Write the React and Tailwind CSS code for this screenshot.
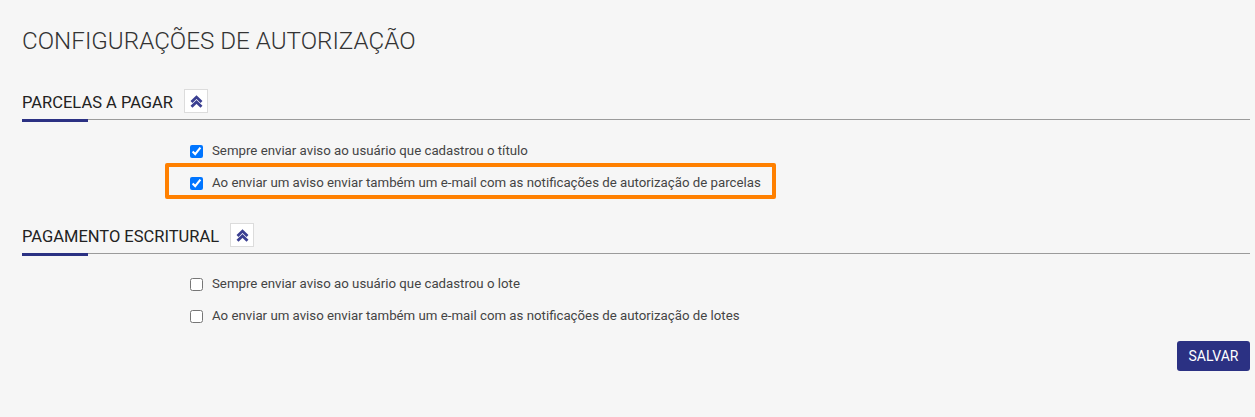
import React from "react";

function Chevrons() {
  return (
    <span className="flex h-[24px] w-[24px] items-center justify-center border border-[#dcdcdc] bg-white">
      <svg width="13" height="13" viewBox="0 0 13 13" fill="none">
        <polyline points="1.5,6.9 6.5,2.1 11.5,6.9" stroke="#3a3f91" strokeWidth="2.8" strokeLinejoin="miter" />
        <polyline points="1.5,11.8 6.5,7 11.5,11.8" stroke="#3a3f91" strokeWidth="2.8" strokeLinejoin="miter" />
      </svg>
    </span>
  );
}

function SectionHeader({ title }) {
  return (
    <div>
      <div className="flex h-[24px] items-center gap-[11px]">
        <span className="pt-[3px] text-[16.5px] leading-[21px] text-[#222]">{title}</span>
        <Chevrons />
      </div>
      <div className="relative mt-[6px] h-[3px]">
        <div className="h-px bg-[#9b9b9b]" />
        <div className="absolute left-0 top-0 h-[3px] w-[66px] bg-[#2b3183]" />
      </div>
    </div>
  );
}

function Row({ label, checked }) {
  return (
    <label className="flex h-[32px] items-center pl-[168px]">
      <input type="checkbox" defaultChecked={checked} className="m-0 h-[13px] w-[13px]" />
      <span className="ml-[9px] text-[13.25px] leading-[16px] text-[#444]">{label}</span>
    </label>
  );
}

export default function App() {
  return (
    <div className="min-h-[417px] w-full bg-[#f6f6f6] pl-[22px] pr-[5px] pt-[27px]" style={{ fontFamily: "Roboto, 'Open Sans', sans-serif" }}>
      <h1 className="text-[24.2px] font-light leading-[28px] text-[#333]">CONFIGURAÇÕES DE AUTORIZAÇÃO</h1>

      <div className="mt-[34px]">
        <SectionHeader title="PARCELAS A PAGAR" />
        <div className="mt-[13px]">
          <Row label="Sempre enviar aviso ao usuário que cadastrou o título" checked />
          <div className="relative">
            <Row label="Ao enviar um aviso enviar também um e-mail com as notificações de autorização de parcelas" checked />
            <div className="pointer-events-none absolute left-[143px] top-[-4px] h-[36px] w-[611px] rounded-[2px] border-4 border-[#ff8000]" />
          </div>
        </div>
      </div>

      <div className="mt-[24px]">
        <SectionHeader title="PAGAMENTO ESCRITURAL" />
        <div className="mt-[12px]">
          <Row label="Sempre enviar aviso ao usuário que cadastrou o lote" />
          <Row label="Ao enviar um aviso enviar também um e-mail com as notificações de autorização de lotes" />
        </div>
      </div>

      <div className="mt-[9px] flex justify-end">
        <button className="h-[30px] w-[73px] rounded-[3px] bg-[#2b3183] text-[14px] text-white">SALVAR</button>
      </div>
    </div>
  );
}
